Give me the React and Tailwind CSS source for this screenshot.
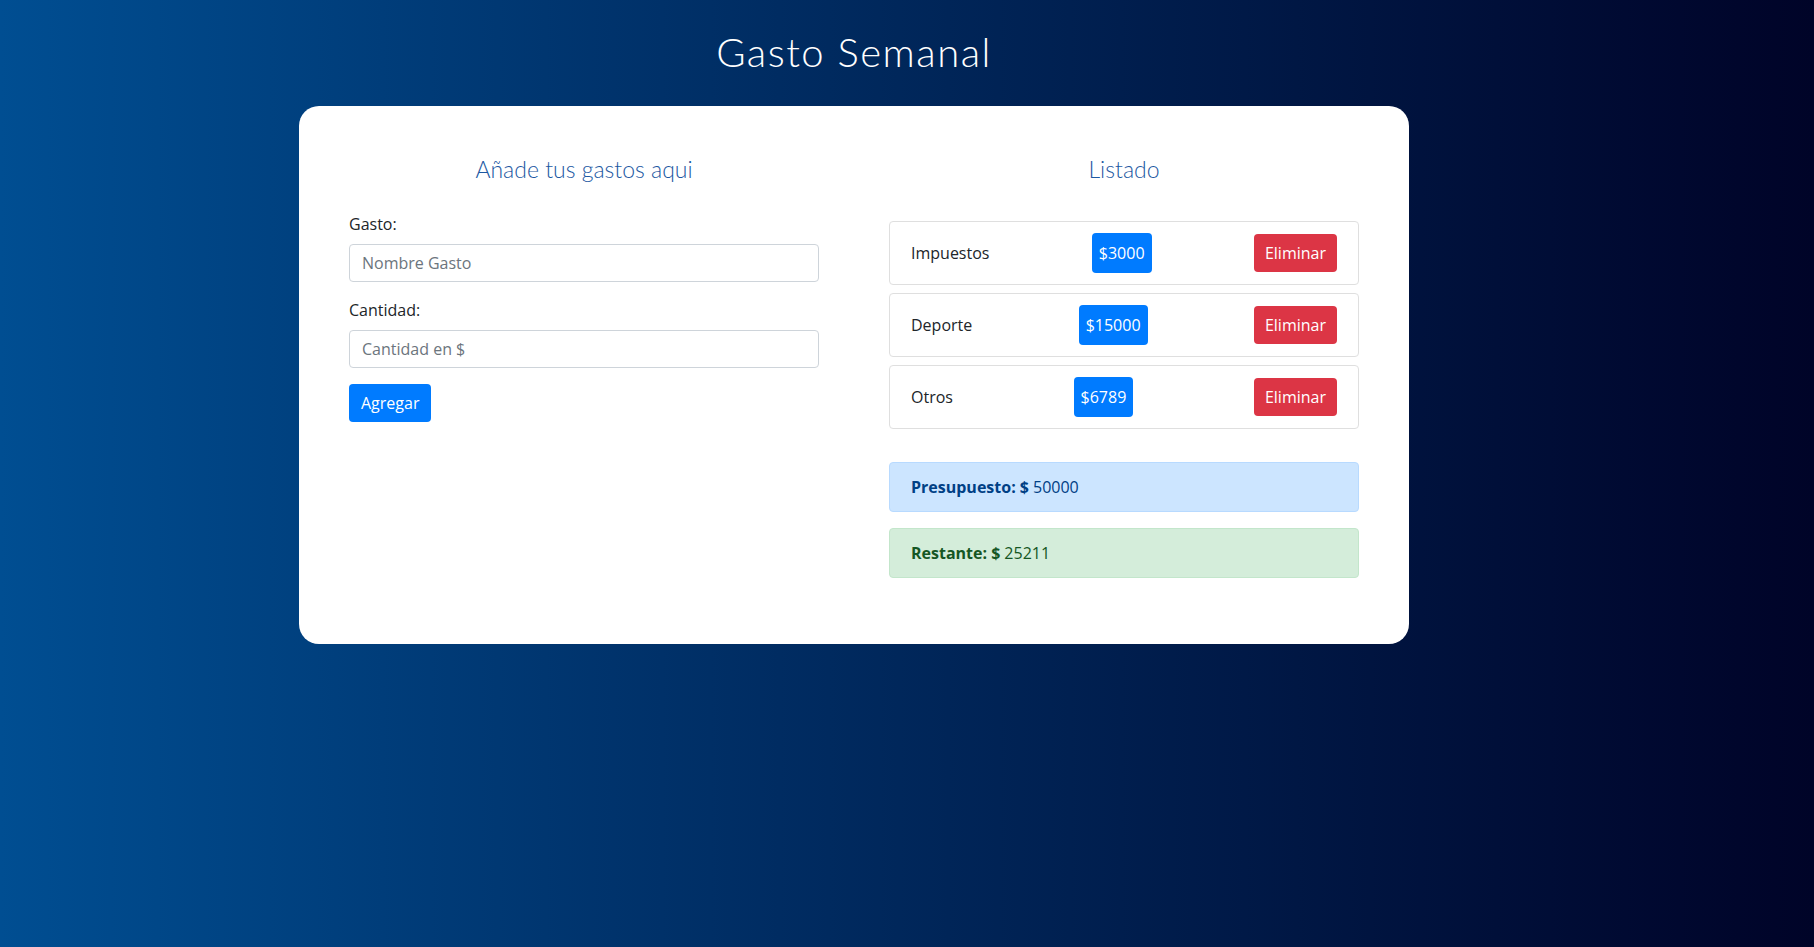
import React, { useState } from "react";

const bodyFont = { fontFamily: '"Segoe UI", "Open Sans", "Noto Sans", sans-serif' };

export default function App() {
  const [gastos] = useState([
    { id: 1, nombre: "Impuestos", cantidad: 3000 },
    { id: 2, nombre: "Deporte", cantidad: 15000 },
    { id: 3, nombre: "Otros", cantidad: 6789 },
  ]);

  return (
    <div
      className="min-h-screen bg-gradient-to-r from-[#004e92] to-[#000428] text-[#212529] text-[16px] leading-[24px]"
      style={bodyFont}
    >
      <div className="w-[1708px]">
        {/* ---------------- TITULO ---------------- */}
        <header className="pt-[28px] pb-[30px] text-center">
          <h1 className="font-['Lato',sans-serif] text-[40px] leading-[48px] font-light tracking-[1.5px] text-white">
            Gasto Semanal
          </h1>
        </header>

        {/* ---------------- CARD ---------------- */}
        <div className="mx-auto w-[1110px] rounded-[20px] bg-white px-[50px] pt-[49px] pb-[66px]">
          <div className="grid grid-cols-2 gap-[70px]">
            {/* Formulario */}
            <div>
              <h2 className="font-['Lato',sans-serif] text-[23px] leading-[29px] font-light text-center text-[#1c58a2] mb-[28px]">
                Añade tus gastos aqui
              </h2>

              <div className="mb-[16px]">
                <label className="block mb-[8px]">Gasto:</label>
                <input
                  type="text"
                  placeholder="Nombre Gasto"
                  className="block w-full h-[38px] px-[12px] border border-[#ced4da] rounded-[4px] placeholder:text-[#6c757d] outline-none"
                />
              </div>

              <div className="mb-[16px]">
                <label className="block mb-[8px]">Cantidad:</label>
                <input
                  type="number"
                  placeholder="Cantidad en $"
                  className="block w-full h-[38px] px-[12px] border border-[#ced4da] rounded-[4px] placeholder:text-[#6c757d] outline-none"
                />
              </div>

              <button className="h-[38px] px-[12px] rounded-[4px] bg-[#007bff] text-white">
                Agregar
              </button>
            </div>

            {/* Listado */}
            <div>
              <h2 className="font-['Lato',sans-serif] text-[23px] leading-[29px] font-light text-center text-[#1c58a2] mb-[37px]">
                Listado
              </h2>

              <ul className="flex flex-col gap-[8px]">
                {gastos.map((g) => (
                  <li
                    key={g.id}
                    className="flex items-center justify-between h-[64px] px-[21px] border border-[#dfdfdf] rounded-[4px]"
                  >
                    <span>{g.nombre}</span>
                    <span className="flex items-center h-[40px] px-[7px] rounded-[4px] bg-[#007bff] text-white">
                      ${g.cantidad}
                    </span>
                    <button className="h-[38px] px-[11px] rounded-[4px] bg-[#dc3545] text-white">
                      Eliminar
                    </button>
                  </li>
                ))}
              </ul>

              <div className="mt-[33px] flex flex-col gap-[16px]">
                <div className="h-[50px] flex items-center px-[21px] rounded-[4px] border border-[#b8daff] bg-[#cce5ff] text-[#004085]">
                  <span className="font-bold mr-[4px]">Presupuesto: $</span>50000
                </div>
                <div className="h-[50px] flex items-center px-[21px] rounded-[4px] border border-[#c3e6cb] bg-[#d4edda] text-[#155724]">
                  <span className="font-bold mr-[4px]">Restante: $</span>25211
                </div>
              </div>
            </div>
          </div>
        </div>
      </div>
    </div>
  );
}
